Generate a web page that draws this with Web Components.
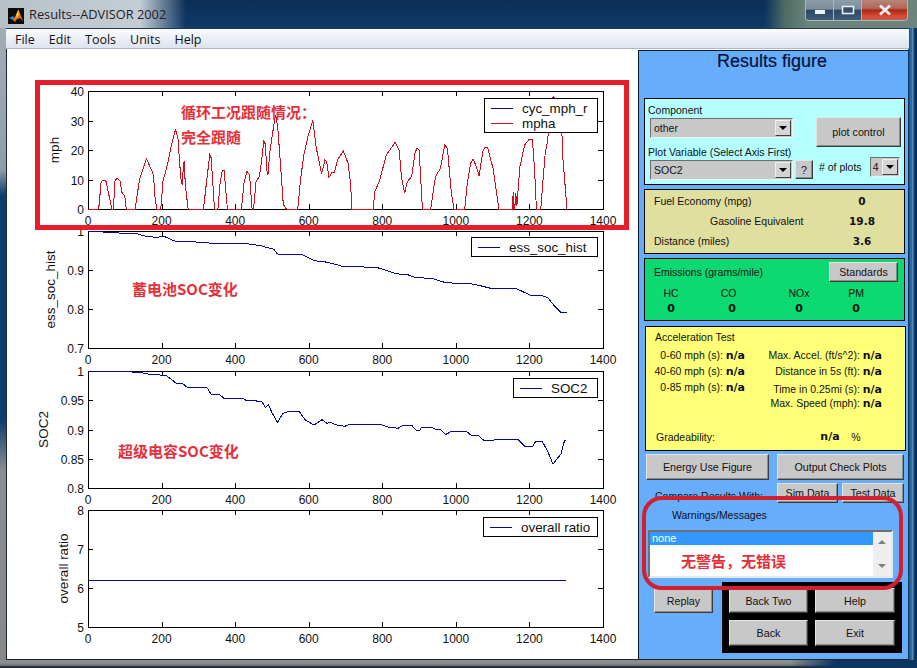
<!DOCTYPE html>
<html>
<head>
<meta charset="utf-8">
<title>Results--ADVISOR 2002</title>
<style>
html, body { margin: 0; padding: 0; background: #0d3560; }
</style>
</head>
<body>
<results-window>
  <results-figure>
    <plot-axes ymin="0" ymax="40" ticks="0,10,20,30,40" ylabel="mph" ylabel-x="52" row-height="118" legend-width="113"
      legend="cyc_mph_r:#000a96,mpha:#cc0f1e" curve="#000a96" curve2="#cc0f1e"
      data="0,0 29,0 36,9.4 48,9.8 65,0 69,0 73,9.4 79,10.5 88,9.4 91,5.8 100,4.3 104,0 128,0 140,10 149,13.3 159,17 168,14.5 178,11.6 182,4.3 187,0 198,0 204,9.4 217,15.6 227,21.8 238,27 245,23.5 249,15.6 254,8.8 256,8.5 260,15.6 263,16 264,8.8 272,0 314,0 323,10 331,18.4 335,17.3 344,0 353,0 359,8.8 365,13 370,13 379,0 417,0 424,8.8 432,12.8 439,11.6 446,0 450,0 457,9.4 466,11 471,15.6 478,23 482,22 486,13.3 489,11.6 495,20 507,30 510,32 516,27.5 525,12.2 531,1.5 539,0 570,0 578,10 586,17.9 598,24.6 611,30 620,21 629,15.6 635,12 644,16.6 649,16 655,10.7 663,12.3 670,12.3 678,16.6 694,19.7 707,15.5 714,8.7 717,0 775,0 780,5.9 793,9.8 811,18.3 835,22.6 846,20 852,11 861,5.3 868,9.3 880,11 889,18.9 894,20.6 900,20 909,0 932,0 943,9.8 947,11.5 958,13.8 970,21.7 977,20.6 988,5.3 995,0 1024,0 1031,8.7 1040,15.5 1047,16.8 1056,14.3 1063,11.2 1074,20 1080,20.9 1086,20.9 1101,13.8 1117,0 1154,0 1156,5.9 1158,0 1160,0 1163,5.3 1166,1 1174,14.3 1187,21.7 1199,23.6 1208,23.6 1214,13.2 1219,0 1231,0 1237,9.8 1243,18.9 1250,23.4 1255,36 1265,38 1285,36 1291,17.2 1302,0"></plot-axes>
    <plot-axes ymin="0.7" ymax="1" ticks="0.7,0.8,0.9,1" ylabel="ess_soc_hist" ylabel-x="48" row-height="117" legend-width="126"
      legend="ess_soc_hist:#000a96" legend-top="6" curve="#000a96"
      data="0,1 77,.995 132,.993 159,.986 182,.984 209,.9855 241,.972 255,.973 314,.971 336,.9685 423,.9685 468,.9625 505,.953 515,.941 582,.94 614,.924 650,.92 694,.909 784,.907 839,.89 866,.889 893,.88 934,.879 974,.867 1034,.866 1061,.861 1097,.8525 1165,.852 1201,.836 1233,.835 1251,.828 1269,.8065 1285,.792 1301,.792"></plot-axes>
    <plot-axes ymin="0.8" ymax="1" ticks="0.8,0.85,0.9,0.95,1" ylabel="SOC2" ylabel-x="41" row-height="117" legend-width="84"
      legend="SOC2:#000a96" curve="#000a96"
      data="0,1 73,.9989 141,.998 159,.995 200,.993 214,.992 239,.9795 257,.979 268,.9727 323,.972 334,.9607 357,.96 370,.953 423,.953 432,.9487 445,.9498 473,.9476 482,.9373 491,.942 500,.929 515,.912 530,.9276 541,.93 575,.93 591,.916 614,.9077 636,.917 650,.9105 657,.9128 676,.9077 698,.9054 712,.9088 793,.9088 816,.9043 843,.902 857,.9071 880,.9071 893,.898 902,.8986 907,.9037 934,.9037 943,.9008 958,.8997 972,.8912 988,.8969 1029,.8969 1042,.89 1061,.8895 1076,.8815 1101,.8815 1110,.8832 1169,.8832 1187,.8712 1209,.8712 1217,.8798 1235,.8798 1250,.8621 1264,.841 1286,.8587 1295,.8803 1300,.8815"></plot-axes>
    <plot-axes ymin="5" ymax="8" ticks="5,6,7,8" ylabel="overall ratio" ylabel-x="61" row-height="117" legend-width="114"
      legend="overall ratio:#000a96" curve="#000a96" data="0,6.2 1300,6.2"></plot-axes>
    <red-note slot="over" style="left:174px;top:53px">循环工况跟随情况：</red-note>
    <red-note slot="over" style="left:174px;top:78px">完全跟随</red-note>
    <red-note slot="over" style="left:125px;top:230px">蓄电池SOC变化</red-note>
    <red-note slot="over" style="left:111px;top:392px">超级电容SOC变化</red-note>
    <red-frame slot="over"></red-frame>
  </results-figure>
  <side-panel></side-panel>
</results-window>

<script>
// small helper, most of the pieces here are only markup + styles
function simpleElement(name, css, html) {
    const template = document.createElement('template');
    template.innerHTML = `<style>${css}</style>${html}`;
    customElements.define(name, class extends HTMLElement {
        constructor() {
            super();
            this.attachShadow({mode: 'open'});
            this.shadowRoot.appendChild(template.content.cloneNode(true));
        }
    });
}

const UI_FONT = `"Liberation Sans", Arial, "Noto Sans CJK SC", sans-serif`;

simpleElement('results-window', `
:host {
    display: flex;
    flex-direction: column;
    width: 917px;
    height: 668px;
    overflow: hidden;
    background:
        linear-gradient(#a8b0b8 0, #8f9ca8 170px, #0e3c6c 195px, #0e3c6c 420px, #8a8e92 470px, #888 100%) left top / 6px 100% no-repeat,
        linear-gradient(90deg, #0a2a4c 0, #2a6ea8 30%, #2a6ea8 45%, #7fa6c8 55%, #123c68 65%, #0a2a4c 100%) right top / 9px 100% no-repeat,
        #0d3560;
    font-family: ${UI_FONT};
}
.titlebar {
    height: 28px;
    display: flex;
    align-items: flex-start;
    flex: none;
    background:
        linear-gradient(90deg, rgba(184, 192, 200, 1) 0, rgba(196, 204, 212, 1) 140px, rgba(13, 48, 88, 0) 186px),
        linear-gradient(90deg, rgba(13, 48, 88, 0) 765px, rgba(88, 118, 100, .85) 785px, rgba(112, 136, 126, .95) 808px),
        linear-gradient(#0c2f56, #0d3a68);
}
.icon {
    margin: 8px 0 0 8px;
    width: 16px;
    height: 16px;
    flex: none;
}
.title {
    margin: 6px 0 0 5px;
    height: 17px;
    font: 12.8px/17px "Open Sans", "Noto Sans", sans-serif;
    color: #1c2228;
}
.spacer { flex: 1; }
.controls {
    display: flex;
    height: 20px;
    margin: 0 9px 0 0;
    border: 1px solid #aab4bc;
    border-top: 0;
    border-radius: 0 0 4px 4px;
    overflow: hidden;
}
.controls div {
    display: flex;
    align-items: center;
    justify-content: center;
    height: 20px;
}
.min, .max {
    width: 28px;
    background: linear-gradient(#8c9ca8 0, #7c8e9c 45%, #2c4a66 52%, #3f5c78 100%);
    border-right: 1px solid #aab4bc;
    box-sizing: border-box;
}
.close {
    width: 45px;
    background: linear-gradient(#b8857a 0, #b4685a 40%, #a82a1a 52%, #d84a34 80%, #c85a48 100%);
}
.menubar {
    height: 21px;
    margin: 0 8px 0 6px;
    flex: none;
    display: flex;
    padding-left: 9px;
    gap: 14px;
    font: 12.5px/21px "Open Sans", "Noto Sans", sans-serif;
    color: #111;
    background: linear-gradient(#fafbfd, #dde4f0);
    border-top: 1px solid #26384c;
    border-bottom: 1px solid #b0b8c4;
    box-sizing: border-box;
}
.client {
    flex: none;
    height: 611px;
    margin: 0 9px 0 6px;
    display: flex;
    box-sizing: border-box;
    border-left: 1px solid #1c2630;
    border-bottom: 1px solid #1c2630;
    background: #fff;
}
.bottom {
    height: 8px;
    flex: none;
    background:
        linear-gradient(90deg, rgba(13, 53, 96, 0) 790px, #0d3560 835px),
        linear-gradient(#8a8f94, #8c8c8c 40%, #6e6e6e 70%, #1c2228 85%, #0e2c4c);
}
`, `
<div class="titlebar">
  <svg class="icon" viewBox="0 0 16 16">
    <rect width="16" height="16" fill="#0c0c0c"/>
    <path d="M1 10 L5 8 L7 10 L5 12Z" fill="#3f7fb0"/>
    <path d="M5 12 L8 7 L10.5 1.5 L13 8 L15 13 L12 10 L9 11 L7 14Z" fill="#e8701a"/>
    <path d="M8 7 L10.5 1.5 L11 6 L9 11Z" fill="#f7c531"/>
  </svg>
  <div class="title">Results--ADVISOR 2002</div>
  <div class="spacer"></div>
  <div class="controls">
    <div class="min"><svg width="14" height="8" viewBox="0 0 14 8"><rect x="2" y="4" width="10" height="4" fill="#f0f3f5"/></svg></div>
    <div class="max"><svg width="14" height="11" viewBox="0 0 14 11"><rect x="1.5" y="1.5" width="11" height="7" fill="#3a5068" stroke="#e8ecf0" stroke-width="1.6"/></svg></div>
    <div class="close"><svg width="16" height="12" viewBox="0 0 16 12"><path d="M3 1.5 L13 10.5 M13 1.5 L3 10.5" stroke="#f0ece8" stroke-width="2.8"/></svg></div>
  </div>
</div>
<div class="menubar"><span>File</span><span>Edit</span><span>Tools</span><span>Units</span><span>Help</span></div>
<div class="client"><slot></slot></div>
<div class="bottom"></div>
`);

simpleElement('results-figure', `
:host {
    display: grid;
    grid-template-rows: 140px 140px 139px 140px;
    align-content: start;
    position: relative;
    box-sizing: border-box;
    width: 631px;
    padding-top: 32px;
    flex: none;
}
`, `<slot></slot><slot name="over"></slot>`);

// annotation text that was pasted on top of the figure
simpleElement('red-note', `
:host {
    position: absolute;
    font: bold 15px/20px "Noto Sans CJK SC", "Liberation Sans", sans-serif;
    color: #e5303a;
    white-space: nowrap;
}
`, `<slot></slot>`);

simpleElement('red-frame', `
:host {
    position: absolute;
    left: 28px;
    top: 31px;
    width: 594px;
    height: 150px;
    box-sizing: border-box;
    border: 5px solid #e81f2b;
}
`, ``);

class PlotAxes extends HTMLElement {
    constructor() {
        super();
        this.attachShadow({mode: 'open'});
    }

    connectedCallback() {
        const a = (name, d) => this.hasAttribute(name) ? this.getAttribute(name) : d;
        const left = 81, right = 596, top = 10;
        const plotH = Number(a('row-height', 117));
        const bottom = top + plotH;
        const ymin = Number(a('ymin')), ymax = Number(a('ymax'));
        const sx = t => left + t * (right - left) / 1400;
        const sy = v => bottom - (v - ymin) * plotH / (ymax - ymin);
        const snap = v => Math.round(v) + .5;

        let ticks = '', labels = '';
        for (let t = 0; t <= 1400; t += 200) {
            const x = snap(sx(t));
            ticks += `M${x} ${top}v5M${x} ${bottom}v-5`;
            labels += `<text x="${sx(t)}" y="${bottom + 16}" text-anchor="middle">${t}</text>`;
        }
        a('ticks').split(',').forEach(s => {
            const y = snap(sy(Number(s)));
            ticks += `M${left} ${y}h5M${right} ${y}h-5`;
            labels += `<text x="77" y="${y + 4.5}" text-anchor="end">${s}</text>`;
        });

        const pts = a('data').trim().split(/\s+/).map(p => {
            const [t, v] = p.split(',').map(Number);
            return `${sx(t).toFixed(1)},${sy(v).toFixed(1)}`;
        }).join(' ');
        const color = a('curve2', a('curve'));

        // legend sits against the top right corner of the axes
        const items = a('legend').split(',').map(s => s.split(':'));
        const lw = Number(a('legend-width'));
        const lh = items.length > 1 ? 34 : 19;
        const lx = right - 6 - lw, ly = top + Number(a('legend-top', 7));
        let legend = `<rect x="${lx + .5}" y="${ly + .5}" width="${lw}" height="${lh}" fill="#fff" stroke="#000"/>`;
        items.forEach(([name, c], i) => {
            const y = Math.floor(ly + (items.length > 1 ? 10 + i * 15 : 10)) + .5;
            legend += `<path d="M${lx + 7} ${y}h22" stroke="${c}" fill="none"/>`;
            legend += `<text x="${lx + 38}" y="${y + 4.5}" style="font-size:13.4px">${name}</text>`;
        });

        const cy = (top + bottom) / 2, yx = Number(a('ylabel-x'));
        this.shadowRoot.innerHTML = `
<style>
:host { display: block; height: 140px; }
svg { display: block; overflow: visible; }
text { font: 12px "Liberation Sans", Arial, sans-serif; fill: #111; }
.crisp { shape-rendering: crispEdges; }
</style>
<svg width="631" height="140">
  <rect class="crisp" x="${left + .5}" y="${top + .5}" width="${right - left}" height="${plotH}" fill="#fff" stroke="#000"/>
  <path class="crisp" d="${ticks}" stroke="#000" fill="none"/>
  <polyline class="crisp" points="${pts}" fill="none" stroke="${color}"/>
  ${labels}
  <g class="crisp">${legend}</g>
  <text transform="translate(${yx} ${cy}) rotate(-90)" text-anchor="middle" style="font-size:13.5px">${a('ylabel')}</text>
</svg>`;
    }
}
customElements.define('plot-axes', PlotAxes);

simpleElement('mat-button', `
:host {
    display: flex;
    align-items: center;
    justify-content: center;
    box-sizing: border-box;
    background: #c8c8c8;
    border: 1px solid;
    border-color: #e4e4e4 #3c3c3c #3c3c3c #e4e4e4;
    box-shadow: inset -1px -1px 0 #8c8c8c;
    font: 10.7px/14px ${UI_FONT};
    color: #111;
    white-space: nowrap;
}
`, `<slot></slot>`);

simpleElement('mat-select', `
:host {
    display: flex;
    align-items: center;
    box-sizing: border-box;
    height: 20px;
    background: #c8c8c8;
    border: 1px solid;
    border-color: #6c6c6c #f0f0f0 #f0f0f0 #6c6c6c;
    font: 10.5px/14px ${UI_FONT};
    color: #111;
    padding: 0 1px 0 3px;
}
.text { flex: 1; }
.arrow {
    width: 16px;
    height: 16px;
    box-sizing: border-box;
    display: flex;
    align-items: center;
    justify-content: center;
    background: #d4d4d4;
    border: 1px solid;
    border-color: #f0f0f0 #404040 #404040 #f0f0f0;
}
`, `
<span class="text"><slot></slot></span>
<span class="arrow"><svg width="8" height="4" viewBox="0 0 8 4"><path d="M0 0H8L4 4Z" fill="#000"/></svg></span>
`);

simpleElement('info-box', `
:host {
    display: block;
    box-sizing: border-box;
    background: var(--box-color, #ccc);
    border: 1px solid #000;
    font: 10.5px/14px ${UI_FONT};
    color: #111;
}
`, `<slot></slot>`);

simpleElement('list-box', `
:host {
    display: flex;
    box-sizing: border-box;
    width: 245px;
    height: 48px;
    background: #fff;
    border: 2px solid;
    border-color: #707070 #e8e8e8 #e8e8e8 #707070;
    font: 11px/13px ${UI_FONT};
}
.rows { flex: 1; }
.row { background: #3399ff; color: #fff; padding-left: 2px; height: 13px; }
.bar {
    width: 18px;
    background: #eeeeee;
    display: flex;
    flex-direction: column;
    justify-content: space-between;
    align-items: center;
    padding: 8px 0;
    box-sizing: border-box;
}
`, `
<div class="rows"><div class="row"><slot></slot></div></div>
<div class="bar">
  <svg width="8" height="4" viewBox="0 0 8 4"><path d="M4 0L8 4H0Z" fill="#808080"/></svg>
  <svg width="8" height="4" viewBox="0 0 8 4"><path d="M0 0H8L4 4Z" fill="#808080"/></svg>
</div>
`);

simpleElement('side-panel', `
:host {
    display: block;
    position: relative;
    box-sizing: border-box;
    width: 270px;
    height: 609px;
    margin-top: 1px;
    padding-left: 5px;
    background: #66adfb;
    border: 1px solid #0a1a30;
    border-width: 1px 0 0 1px;
    font: 10.5px/14px ${UI_FONT};
    color: #111;
}
b { font: bold 11px/14px "DejaVu Sans", sans-serif; }
h1 {
    margin: 0;
    height: 47px;
    padding-right: 8px;
    text-align: center;
    font: 18px/21px ${UI_FONT};
    color: #04103c;
    -webkit-text-stroke: .2px #04103c;
    box-sizing: border-box;
}
.cyan { --box-color: #b4ffff; width: 261px; height: 87px; }
.cyan-grid {
    display: grid;
    grid-template-columns: 143px 2px 18px 3px 1fr;
    grid-template-rows: 19px 20px 22px 20px;
    padding: 0 0 0 5px;
    margin-top: 0;
}
.lbl-left { margin-left: -2px; align-self: end; line-height: 15px; }
.fuel {
    --box-color: #dfdf9f;
    width: 261px;
    height: 65px;
    margin-top: 4px;
    display: grid;
    grid-template-columns: 1fr 84px;
    grid-template-rows: 21px 20px 19px;
    padding: 0 0 0 9px;
    align-items: center;
}
.fuel b { text-align: center; font-size: 10.5px; }
.emis {
    --box-color: #0cd972;
    width: 261px;
    height: 63px;
    margin-top: 4px;
    padding: 3px 0 0 9px;
}
.emis-top { display: flex; justify-content: space-between; align-items: center; height: 20px; padding-right: 6px; }
.emis-grid {
    display: grid;
    grid-template-columns: 34px 88px 46px 68px;
    justify-items: center;
    margin-top: 4px;
    line-height: 15px;
}
.emis-grid b { font-size: 11px; line-height: 16px; }
.emis-grid .co { margin-right: 7px; }
.accel {
    --box-color: #ffff78;
    width: 261px;
    height: 125px;
    margin: 5px 0 0 1px;
    padding: 3px 0 0 9px;
    position: relative;
}
.accel-grid {
    display: grid;
    grid-template-columns: 90px 137px;
    grid-auto-rows: 16px;
    margin-top: 3px;
    justify-items: end;
    align-items: center;
    white-space: nowrap;
}
.accel-grid .third { margin-top: 4px; }
.accel-grid .fourth { grid-column: 2; }
.grade {
    display: grid;
    grid-template-columns: 160px 28px 24px;
    margin: 19px 0 0 1px;
}
.grade b { text-align: center; }
.btn-row { display: flex; margin-top: 3px; padding-left: 2px; }
.compare { display: flex; margin-top: 3px; padding-left: 11px; align-items: center; }
.compare span { width: 122px; margin-top: 5px; }
.warn { padding-left: 28px; height: 22px; line-height: 15px; margin-top: 5px; }
.lower { display: flex; margin-top: 4px; padding-left: 10px; }
.black {
    margin-left: 9px;
    width: 180px;
    height: 71px;
    box-sizing: border-box;
    background: #000;
    padding: 6px 7px;
    display: grid;
    grid-template-columns: 79px 80px;
    grid-template-rows: 25px 26px;
    gap: 7px 7px;
}
.listwrap { padding-left: 4px; }
.listwrap, .btn-row, .compare { position: relative; }
.rounded {
    position: absolute;
    left: 3px;
    top: 445px;
    width: 261px;
    height: 94px;
    box-sizing: border-box;
    border: 4px solid #d2202e;
    border-radius: 20px;
}
red-note.msg { left: 42px; top: 500px; }
`, `
<h1>Results figure</h1>
<info-box class="cyan">
  <div class="cyan-grid">
    <span class="lbl-left" style="grid-column:1/3">Component</span>
    <span></span><span></span><span></span>
    <mat-select style="grid-column:1;grid-row:2">other</mat-select>
    <mat-button style="grid-column:3/6;grid-row:1/4;width:85px;height:30px;margin:18px 0 0 21px">plot control</mat-button>
    <span class="lbl-left" style="grid-column:1/3;grid-row:3">Plot Variable (Select Axis First)</span>
    <mat-select style="grid-column:1;grid-row:4">SOC2</mat-select>
    <mat-button style="grid-column:3;grid-row:4;width:18px;height:19px">?</mat-button>
    <div style="grid-column:4/6;grid-row:3/5;display:flex;align-items:center;margin:16px 0 0 6px;gap:8px;white-space:nowrap;width:90px">
      <span>&#35; of plots</span>
      <mat-select style="width:30px;padding-left:2px">4</mat-select>
    </div>
  </div>
</info-box>
<info-box class="fuel">
  <span>Fuel Economy (mpg)</span><b>0</b>
  <span style="padding-left:56px">Gasoline Equivalent</span><b>19.8</b>
  <span>Distance (miles)</span><b>3.6</b>
</info-box>
<info-box class="emis">
  <div class="emis-top"><span>Emissions (grams/mile)</span><mat-button style="width:69px;height:20px">Standards</mat-button></div>
  <div class="emis-grid">
    <span>HC</span><span class="co">CO</span><span>NOx</span><span>PM</span>
    <b>0</b><b>0</b><b>0</b><b>0</b>
  </div>
</info-box>
<info-box class="accel">
  <div>Acceleration Test</div>
  <div class="accel-grid">
    <span>0-60 mph (s): <b>n/a</b></span><span>Max. Accel. (ft/s^2): <b>n/a</b></span>
    <span>40-60 mph (s): <b>n/a</b></span><span>Distance in 5s (ft): <b>n/a</b></span>
    <span>0-85 mph (s): <b>n/a</b></span><span class="third">Time in 0.25mi (s): <b>n/a</b></span>
    <span class="fourth">Max. Speed (mph): <b>n/a</b></span>
  </div>
  <div class="grade"><span>Gradeability:</span><b>n/a</b><span style="text-align:center">%</span></div>
</info-box>
<div class="btn-row">
  <mat-button style="width:123px;height:26px">Energy Use Figure</mat-button>
  <mat-button style="width:127px;height:26px;margin-left:8px">Output Check Plots</mat-button>
</div>
<div class="compare">
  <span>Compare Results With:</span>
  <mat-button style="width:61px;height:20px">Sim Data</mat-button>
  <mat-button style="width:62px;height:20px;margin-left:4px">Test Data</mat-button>
</div>
<div class="warn">Warnings/Messages</div>
<div class="listwrap"><list-box>none</list-box></div>
<div class="lower">
  <mat-button style="width:59px;height:25px;margin-top:6px">Replay</mat-button>
  <div class="black">
    <mat-button>Back Two</mat-button>
    <mat-button>Help</mat-button>
    <mat-button>Back</mat-button>
    <mat-button>Exit</mat-button>
  </div>
</div>
<div class="rounded"></div>
<red-note class="msg">无警告，无错误</red-note>
`);
</script>
</body>
</html>
